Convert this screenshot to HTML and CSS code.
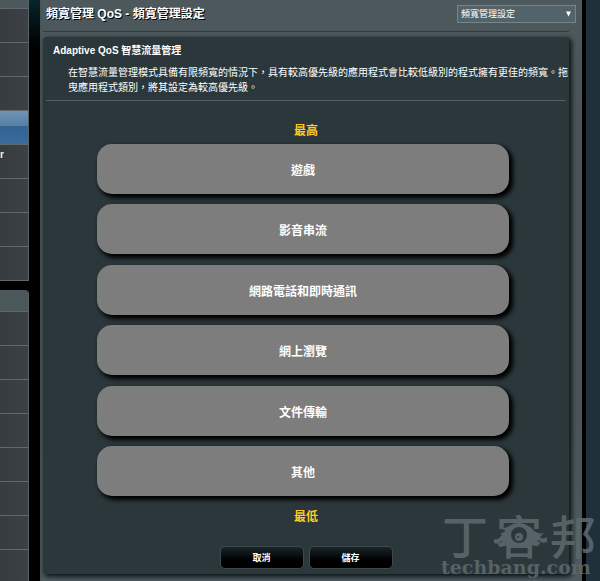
FILE: index.html
```html
<!DOCTYPE html>
<html lang="zh-Hant">
<head>
    <meta charset="UTF-8">
    <meta name="viewport" content="width=device-width, initial-scale=1.0">
    <title>頻寬管理 QoS - 頻寬管理設定</title>
    <link rel="stylesheet" href="styles.css">
</head>
<body>
    <nav class="sidebar">
        <div class="menu">
            <div class="menu-head short"></div>
            <div class="menu-item"></div>
            <div class="menu-item"></div>
            <div class="menu-item"></div>
            <div class="menu-item active"></div>
            <div class="menu-item">r</div>
            <div class="menu-item"></div>
            <div class="menu-item"></div>
            <div class="menu-item"></div>
        </div>
        <div class="menu rounded">
            <div class="menu-head"></div>
            <div class="menu-item"></div>
            <div class="menu-item"></div>
            <div class="menu-item"></div>
            <div class="menu-item"></div>
            <div class="menu-item"></div>
            <div class="menu-item"></div>
            <div class="menu-item"></div>
            <div class="menu-item"></div>
        </div>
    </nav>

    <main class="content">
        <header class="top">
            <h1>頻寬管理 QoS - 頻寬管理設定</h1>
            <div class="page-select">
                <select aria-label="頻寬管理設定">
                    <option>頻寬管理設定</option>
                </select>
                <svg class="arrow" viewBox="0 0 6 6" aria-hidden="true"><path d="M0 0h6L3 6z"/></svg>
            </div>
        </header>

        <section class="panel">
            <h2>Adaptive QoS 智慧流量管理</h2>
            <p class="desc">在智慧流量管理模式具備有限頻寬的情況下，具有較高優先級的應用程式會比較低級別的程式擁有更佳的頻寬。拖曳應用程式類別，將其設定為較高優先級。</p>
            <hr>
            <div class="level">最高</div>
            <ul class="priority">
                <li>遊戲</li>
                <li>影音串流</li>
                <li>網路電話和即時通訊</li>
                <li>網上瀏覽</li>
                <li>文件傳輸</li>
                <li>其他</li>
            </ul>
            <div class="level">最低</div>
            <div class="actions">
                <button type="button">取消</button>
                <button type="button">儲存</button>
            </div>
        </section>
    </main>

    <!-- site watermark -->
    <svg class="watermark" viewBox="0 0 160 72" role="img" aria-label="techbang.com">
        <g class="wm-name">
            <text x="2" y="45">丁</text>
            <text x="56" y="45">客</text>
            <text x="110" y="45">邦</text>
        </g>
        <path class="wm-shape" d="M58 19q7 1 11-2q11-7 22 2q6 7 13 5l-4 4q3 3 7 0v5q-5 2-8-2l-6 5H67l-6-4q-3 4-7 2v-4q4 1 6-2q5-4 5-7z"/>
        <circle class="wm-dark" cx="79" cy="26" r="8"/>
        <circle class="wm-shape" cx="79" cy="28" r="4"/>
        <circle class="wm-dark" cx="78" cy="28" r="1"/>
        <text class="wm-url" x="1" y="65">techbang.com</text>
    </svg>

    <script>
        const list = document.querySelector('.priority');
        let dragged = null;

        list.querySelectorAll('li').forEach(function (item) {
            item.draggable = true;
            item.addEventListener('dragstart', function () {
                dragged = item;
            });
            item.addEventListener('dragover', function (e) {
                e.preventDefault();
            });
            item.addEventListener('drop', function () {
                if (dragged && dragged !== item) {
                    list.insertBefore(dragged, item);
                }
            });
        });
    </script>
</body>
</html>
```
FILE: styles.css
```css
* {
    box-sizing: border-box;
}
body {
    margin: 0;
    height: 100vh;
    overflow: hidden;
    display: flex;
    background: linear-gradient(#07242c, #000 48px);
    font-family: "Liberation Sans", "Noto Sans CJK TC", sans-serif;
    color: #fff;
}

/* left menu */
.sidebar {
    flex: 0 0 29px;
    margin-right: 11px;
}
.menu {
    margin-bottom: 9px;
    border-right: 1px solid #596164;
    overflow: hidden;
}
.rounded {
    border-top-right-radius: 4px;
}
.menu-head {
    height: 22px;
    background: #4c585b;
    border-bottom: 1px solid #60696c;
}
.short {
    height: 9px;
}
.menu-item {
    height: 34px;
    background: linear-gradient(to right, #373c3f, #3c4145);
    border-bottom: 1px solid #60696c;
    font-size: 10px;
    font-weight: bold;
    line-height: 20px;
    color: #fff3c4;
}
.active {
    background: linear-gradient(#6f94b3, #557fa4 15px, #336393 15px, #386ba0);
}

/* main area */
.content {
    flex: 1;
    min-width: 0;
    padding: 0 13px 8px 1px;
    border-left: 2px solid #4b5457;
    background: linear-gradient(#4d595d, #4b5356 120px, #4b5356 400px, #4d5a5e);
    box-shadow: 4px 0 #000, 30px 0 #1f303a;
    margin-right: 18px;
}
.top {
    display: flex;
    justify-content: space-between;
    align-items: center;
    height: 32px;
    padding: 0 0 4px 3px;
    border-bottom: 1px solid #303b3f;
    margin-bottom: 5px;
}
h1 {
    margin: 0;
    font-size: 12px;
    line-height: 18px;
    text-shadow: 1px 1px #000;
}
.page-select {
    position: relative;
    width: 119px;
    margin-right: -7px;
}
.page-select select {
    display: block;
    appearance: none;
    width: 100%;
    height: 18px;
    padding: 0 3px;
    border: 1px solid #74868a;
    border-radius: 0;
    background: #526469;
    color: #fff;
    font-family: inherit;
    font-size: 9px;
}
.arrow {
    position: absolute;
    top: 6px;
    right: 5px;
    width: 5px;
    height: 6px;
    fill: #fff;
    pointer-events: none;
}

.panel {
    padding: 6px 3px 5px;
    border-radius: 4px;
    background: #2b373b;
    box-shadow: 2px 2px 4px 1px #111a1c;
}
h2 {
    margin: 0 7px 7px;
    font-size: 10px;
    line-height: 15px;
}
.desc {
    margin: 0 -3px 0 22px;
    font-size: 10px;
    line-height: 15px;
}
hr {
    margin: 5px 0 21px;
    border: 0;
    border-top: 1px solid #566165;
}
.level {
    color: #fc2;
    font-size: 12px;
    font-weight: bold;
    line-height: 18px;
    text-align: center;
}
.priority {
    display: flex;
    flex-direction: column;
    justify-content: space-between;
    min-height: 352px;
    margin: 4px 57px 12px 51px;
    padding: 0;
    list-style: none;
}
.priority li {
    height: 50px;
    border-radius: 15px;
    background: #7d7d7d;
    box-shadow: 3px 3px 4px 1px #000;
    font-size: 12px;
    font-weight: bold;
    line-height: 54px;
    text-align: center;
    cursor: move;
}
.actions {
    display: flex;
    justify-content: center;
    gap: 5px;
    margin-top: 20px;
}
.actions button {
    width: 84px;
    height: 23px;
    padding: 0;
    border: 1px solid #3c494d;
    border-radius: 5px;
    background: linear-gradient(#1a2528, #000 65%);
    color: #fff;
    font-family: inherit;
    font-size: 9px;
    font-weight: bold;
}

.watermark {
    position: absolute;
    right: 0;
    bottom: 0;
    width: 160px;
    height: 72px;
    overflow: visible;
    opacity: 0.9;
    pointer-events: none;
}
.wm-name {
    fill: #5b676b;
    font-family: "Noto Sans CJK TC", sans-serif;
    font-size: 46px;
    font-weight: 500;
}
.wm-url {
    fill: #5b676b;
    font-family: "DejaVu Serif", serif;
    font-size: 19px;
    font-weight: bold;
}
.wm-shape {
    fill: #5b676b;
}
.wm-dark {
    fill: #2b373b;
}
```
